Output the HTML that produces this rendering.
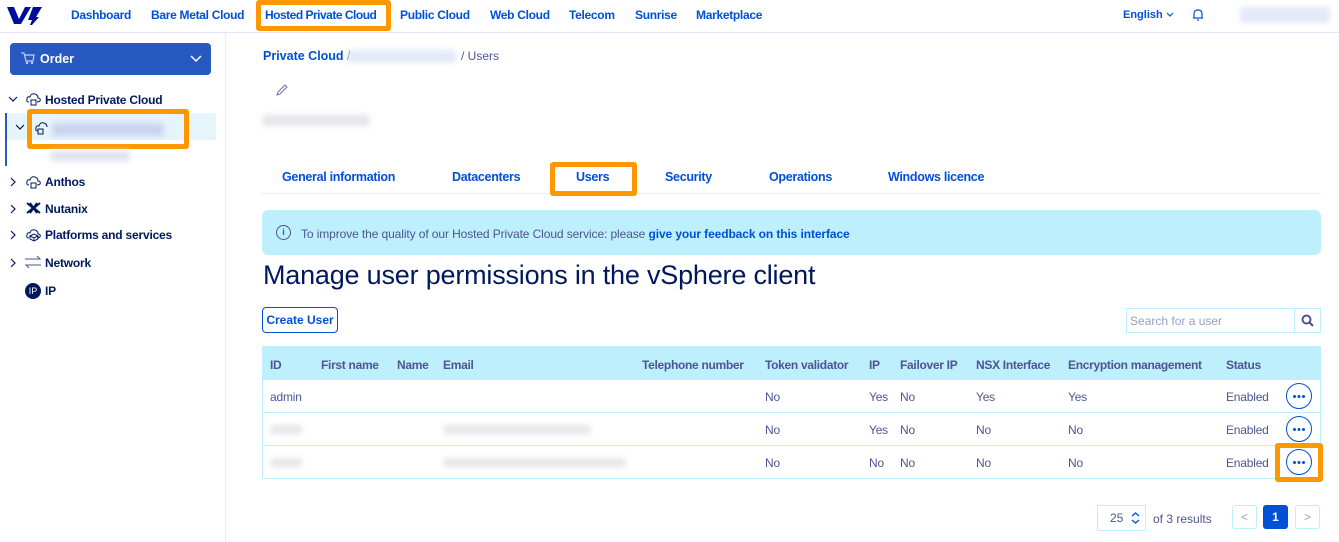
<!DOCTYPE html>
<html><head><meta charset="utf-8"><style>
*{margin:0;padding:0;box-sizing:border-box}
body{width:1339px;height:542px;overflow:hidden;background:#fff;font-family:"Liberation Sans",sans-serif;position:relative;color:#4d5592}
.a{position:absolute;white-space:nowrap}
.nav{font-size:12px;color:#0050d7;font-weight:bold;top:8px;letter-spacing:-0.3px}
.blur{filter:blur(3px);background:#dde3ee;border-radius:3px}
.side{font-size:12px;font-weight:bold;color:#00185e;letter-spacing:-0.2px}
.tab{font-size:12.5px;font-weight:bold;color:#0050d7;top:170px;letter-spacing:-0.3px}
.th{font-size:12px;font-weight:bold;color:#4d5592;top:358px;letter-spacing:-0.3px}
.td{font-size:12px;color:#4d5592;letter-spacing:-0.2px}
.dots{width:26px;height:26px;border:1.5px solid #0050d7;border-radius:50%;background:#fff}
.dots::after{content:"";position:absolute;left:6px;top:10.5px;width:3px;height:3px;border-radius:50%;background:#0050d7;box-shadow:4.5px 0 #0050d7,9px 0 #0050d7}
.orange{border:5px solid #ff9800;border-radius:3px}
</style></head><body>
<!-- header -->
<div class="a" style="left:0;top:0;width:1339px;height:33px;border-bottom:1px solid #e4e4f4"></div>
<svg class="a" style="left:6px;top:4px" width="36" height="22" viewBox="0 0 36 22"><path d="M1 3 L8 3 L13 15 L19 3 L25 3 L15 20 L8 20 Z" fill="#000e9c"/><path d="M27 3 L36 3 L30 13 L33 13 L26 21 L24 21 L26 16 L22 16 Z" fill="#000e9c"/></svg>
<div class="a nav" style="left:71px">Dashboard</div>
<div class="a nav" style="left:151px">Bare Metal Cloud</div>
<div class="a orange" style="left:256px;top:0;width:135px;height:31px;background:#fff"></div>
<div class="a nav" style="left:265px;letter-spacing:-0.5px">Hosted Private Cloud</div>
<div class="a nav" style="left:400px">Public Cloud</div>
<div class="a nav" style="left:490px">Web Cloud</div>
<div class="a nav" style="left:569px">Telecom</div>
<div class="a nav" style="left:635px">Sunrise</div>
<div class="a nav" style="left:696px">Marketplace</div>
<div class="a" style="left:1123px;top:9px;font-size:11px;font-weight:bold;color:#0050d7">English</div>
<svg class="a" style="left:1166px;top:12px" width="8" height="6" viewBox="0 0 8 6"><path d="M1 1 L4 4 L7 1" fill="none" stroke="#0050d7" stroke-width="1.2"/></svg>
<svg class="a" style="left:1192px;top:8px" width="12" height="13" viewBox="0 0 12 13"><path d="M2 10 L2 6 Q2 2 6 2 Q10 2 10 6 L10 10 Z M1 10 H11 M5 12 H7" fill="none" stroke="#0050d7" stroke-width="1.2"/></svg>
<div class="a blur" style="left:1240px;top:7px;width:90px;height:16px;background:#e3e9f7"></div>
<!-- sidebar -->
<div class="a" style="left:225px;top:33px;width:1px;height:509px;background:#eceef5"></div>
<div class="a" style="left:10px;top:43px;width:201px;height:32px;background:#2859c0;border-radius:4px"></div>
<svg class="a" style="left:21px;top:52px" width="14" height="13" viewBox="0 0 14 13"><path d="M0 1 H3 L5 9 H12 L13 3 H4" fill="none" stroke="#bfd0f5" stroke-width="1.2"/><circle cx="6" cy="11" r="1.2" fill="#bfd0f5"/><circle cx="11" cy="11" r="1.2" fill="#bfd0f5"/></svg>
<div class="a" style="left:40px;top:52px;font-size:12.5px;font-weight:bold;color:#fff">Order</div>
<svg class="a" style="left:190px;top:55px" width="12" height="8" viewBox="0 0 12 8"><path d="M1 1 L6 6 L11 1" fill="none" stroke="#fff" stroke-width="1.5"/></svg>
<svg class="a" style="left:8px;top:96px" width="10" height="6" viewBox="0 0 10 6"><path d="M1 1 L5 5 L9 1" fill="none" stroke="#00185e" stroke-width="1.2"/></svg>
<svg class="a" style="left:26px;top:92px" width="15" height="14" viewBox="0 0 15 14"><path d="M3 10 Q0 10 1 7 Q1 4 4 5 Q5 1 9 2 Q12 3 12 6 Q15 6 14 9 Q13 10 11 10" fill="none" stroke="#00185e" stroke-width="1"/><rect x="5" y="8" width="5" height="5" fill="none" stroke="#00185e"/></svg>
<div class="a side" style="left:45px;top:93px">Hosted Private Cloud</div>
<div class="a" style="left:5px;top:113px;width:211px;height:27px;background:#e6f4fc"></div>
<div class="a" style="left:5px;top:113px;width:2px;height:53px;background:#2859c0"></div>
<div class="a orange" style="left:27px;top:109px;width:162px;height:40px"></div>
<svg class="a" style="left:15px;top:124px" width="10" height="6" viewBox="0 0 10 6"><path d="M1 1 L5 5 L9 1" fill="none" stroke="#00185e" stroke-width="1.2"/></svg>
<svg class="a" style="left:35px;top:121px" width="14" height="14" viewBox="0 0 14 14"><path d="M3 10 Q0 10 1 7 Q1 4 4 5 Q5 1 9 2 Q12 3 12 6" fill="none" stroke="#00185e" stroke-width="1"/><rect x="3" y="8" width="5" height="5" fill="none" stroke="#00185e"/></svg>
<div class="a blur" style="left:52px;top:123px;width:112px;height:13px;background:#c9d3f0"></div>
<div class="a blur" style="left:50px;top:151px;width:80px;height:10px"></div>
<svg class="a" style="left:10px;top:177px" width="6" height="10" viewBox="0 0 6 10"><path d="M1 1 L5 5 L1 9" fill="none" stroke="#00185e" stroke-width="1.2"/></svg>
<svg class="a" style="left:26px;top:175px" width="15" height="14" viewBox="0 0 15 14"><path d="M3 10 Q0 10 1 7 Q1 4 4 5 Q5 1 9 2 Q12 3 12 6 Q15 6 14 9 Q13 10 11 10" fill="none" stroke="#00185e" stroke-width="1"/><rect x="5" y="8" width="5" height="5" fill="none" stroke="#00185e"/></svg>
<div class="a side" style="left:45px;top:175px">Anthos</div>
<svg class="a" style="left:10px;top:204px" width="6" height="10" viewBox="0 0 6 10"><path d="M1 1 L5 5 L1 9" fill="none" stroke="#00185e" stroke-width="1.2"/></svg>
<svg class="a" style="left:26px;top:202px" width="15" height="12" viewBox="0 0 15 12"><path d="M1 1 L7 6 L1 11 M14 1 L8 6 L14 11 M4 1 L11 11 M11 1 L4 11" stroke="#00185e" stroke-width="2" fill="none"/></svg>
<div class="a side" style="left:45px;top:202px">Nutanix</div>
<svg class="a" style="left:10px;top:230px" width="6" height="10" viewBox="0 0 6 10"><path d="M1 1 L5 5 L1 9" fill="none" stroke="#00185e" stroke-width="1.2"/></svg>
<svg class="a" style="left:26px;top:228px" width="15" height="14" viewBox="0 0 15 14"><path d="M3 10 Q0 10 1 7 Q1 4 4 5 Q5 1 9 2 Q12 3 12 6 Q15 6 14 9 Q13 10 11 10 M4 8 L8 6 L12 8 L8 10 Z M4 8 V11 L8 13 L12 11 V8 M8 10 V13" fill="none" stroke="#00185e" stroke-width="1"/></svg>
<div class="a side" style="left:45px;top:228px">Platforms and services</div>
<svg class="a" style="left:10px;top:258px" width="6" height="10" viewBox="0 0 6 10"><path d="M1 1 L5 5 L1 9" fill="none" stroke="#00185e" stroke-width="1.2"/></svg>
<svg class="a" style="left:25px;top:256px" width="16" height="12" viewBox="0 0 16 12"><path d="M0 3 H15 L12 0 M16 9 H1 L4 12" stroke="#4d5592" stroke-width="1" fill="none"/></svg>
<div class="a side" style="left:45px;top:256px">Network</div>
<div class="a" style="left:25px;top:283px;width:16px;height:16px;border-radius:50%;background:#00185e;color:#fff;font-size:9px;text-align:center;line-height:16px">IP</div>
<div class="a side" style="left:45px;top:284px">IP</div>
<!-- main -->
<div class="a" style="left:263px;top:49px;font-size:12.5px;font-weight:bold;color:#0050d7">Private Cloud <span style="color:#4d5592;font-weight:normal">/</span></div>
<div class="a blur" style="left:348px;top:50px;width:108px;height:13px;background:#e3e9f7"></div>
<div class="a" style="left:461px;top:49px;font-size:12px;color:#4d5592">/ Users</div>
<svg class="a" style="left:275px;top:84px" width="13" height="13" viewBox="0 0 13 13"><path d="M2 11 L3 8 L10 1 L12 3 L5 10 Z" fill="none" stroke="#6a6fa6" stroke-width="1"/></svg>
<div class="a blur" style="left:262px;top:115px;width:108px;height:11px;background:#e6e6ea"></div>
<div class="a" style="left:262px;top:193px;width:1059px;height:1px;background:#e6eef6"></div>
<div class="a orange" style="left:550px;top:162px;width:87px;height:34px"></div>
<div class="a tab" style="left:282px">General information</div>
<div class="a tab" style="left:452px">Datacenters</div>
<div class="a tab" style="left:576px">Users</div>
<div class="a tab" style="left:665px">Security</div>
<div class="a tab" style="left:769px">Operations</div>
<div class="a tab" style="left:888px">Windows licence</div>
<div class="a" style="left:262px;top:210px;width:1059px;height:45px;background:#bdeffc;border-radius:6px"></div>
<div class="a" style="left:276px;top:225px;width:15px;height:15px;border:1.3px solid #4d5592;border-radius:50%;font-size:9px;text-align:center;line-height:13px;font-weight:bold">i</div>
<div class="a" style="left:301px;top:227px;font-size:12px;color:#4d5592;letter-spacing:-0.1px">To improve the quality of our Hosted Private Cloud service: please <b style="color:#0050d7">give your feedback on this interface</b></div>
<div class="a" style="left:263px;top:260px;font-size:27px;color:#00185e;letter-spacing:-0.2px">Manage user permissions in the vSphere client</div>
<div class="a" style="left:262px;top:307px;width:76px;height:26px;border:1px solid #0050d7;border-radius:4px;font-size:12px;font-weight:bold;color:#0050d7;text-align:center;line-height:24px">Create User</div>
<div class="a" style="left:1126px;top:308px;width:195px;height:25px;border:1px solid #bdeffc"></div>
<div class="a" style="left:1294px;top:308px;width:1px;height:25px;background:#bdeffc"></div>
<div class="a" style="left:1130px;top:314px;font-size:12px;color:#9a9dbf">Search for a user</div>
<svg class="a" style="left:1301px;top:314px" width="13" height="13" viewBox="0 0 13 13"><circle cx="5.5" cy="5.5" r="4" fill="none" stroke="#4d5592" stroke-width="2"/><path d="M8.5 8.5 L12 12" stroke="#4d5592" stroke-width="2.2"/></svg>
<!-- table -->
<div class="a" style="left:262px;top:346px;width:1059px;height:133px;border:1px solid #bdeffc"></div>
<div class="a" style="left:262px;top:346px;width:1059px;height:34px;background:#bdeffc"></div>
<div class="a" style="left:262px;top:412px;width:1059px;height:1px;background:#bdeffc"></div>
<div class="a" style="left:262px;top:445px;width:1059px;height:1px;background:#bdeffc"></div>
<div class="a th" style="left:270px">ID</div>
<div class="a th" style="left:321px">First name</div>
<div class="a th" style="left:397px">Name</div>
<div class="a th" style="left:443px">Email</div>
<div class="a th" style="left:642px">Telephone number</div>
<div class="a th" style="left:765px">Token validator</div>
<div class="a th" style="left:869px">IP</div>
<div class="a th" style="left:900px">Failover IP</div>
<div class="a th" style="left:976px">NSX Interface</div>
<div class="a th" style="left:1068px">Encryption management</div>
<div class="a th" style="left:1226px">Status</div>

<div class="a td" style="left:270px;top:390px">admin</div>
<div class="a td" style="left:765px;top:390px">No</div><div class="a td" style="left:869px;top:390px">Yes</div><div class="a td" style="left:900px;top:390px">No</div><div class="a td" style="left:976px;top:390px">Yes</div><div class="a td" style="left:1068px;top:390px">Yes</div><div class="a td" style="left:1226px;top:390px">Enabled</div>
<div class="a dots" style="left:1286px;top:383px"></div>

<div class="a blur" style="left:270px;top:425px;width:32px;height:9px;background:#e6e6ea"></div>
<div class="a blur" style="left:443px;top:425px;width:148px;height:9px;background:#e6e6ea"></div>
<div class="a td" style="left:765px;top:423px">No</div><div class="a td" style="left:869px;top:423px">Yes</div><div class="a td" style="left:900px;top:423px">No</div><div class="a td" style="left:976px;top:423px">No</div><div class="a td" style="left:1068px;top:423px">No</div><div class="a td" style="left:1226px;top:423px">Enabled</div>
<div class="a dots" style="left:1286px;top:416px"></div>

<div class="a blur" style="left:270px;top:458px;width:32px;height:9px;background:#e6e6ea"></div>
<div class="a blur" style="left:443px;top:458px;width:183px;height:9px;background:#e6e6ea"></div>
<div class="a td" style="left:765px;top:456px">No</div><div class="a td" style="left:869px;top:456px">No</div><div class="a td" style="left:900px;top:456px">No</div><div class="a td" style="left:976px;top:456px">No</div><div class="a td" style="left:1068px;top:456px">No</div><div class="a td" style="left:1226px;top:456px">Enabled</div>
<div class="a orange" style="left:1275px;top:443px;width:48px;height:39px;background:#fff"></div>
<div class="a dots" style="left:1286px;top:449px"></div>
<!-- pagination -->
<div class="a" style="left:1097px;top:505px;width:49px;height:26px;border:1px solid #bdeffc"></div>
<div class="a" style="left:1110px;top:511px;font-size:12px;color:#4d5592">25</div>
<svg class="a" style="left:1131px;top:512px" width="9" height="12" viewBox="0 0 9 12"><path d="M1 4 L4.5 1 L8 4 M1 8 L4.5 11 L8 8" fill="none" stroke="#0050d7" stroke-width="1.3"/></svg>
<div class="a" style="left:1153px;top:512px;font-size:12px;color:#4d5592">of 3 results</div>
<div class="a" style="left:1232px;top:505px;width:25px;height:24px;border:1px solid #bdeffc;border-radius:3px;color:#9ab;text-align:center;font-size:12px;line-height:22px">&lt;</div>
<div class="a" style="left:1263px;top:505px;width:25px;height:24px;background:#0050d7;border-radius:3px;color:#fff;text-align:center;font-size:12px;font-weight:bold;line-height:24px">1</div>
<div class="a" style="left:1295px;top:505px;width:25px;height:24px;border:1px solid #bdeffc;border-radius:3px;color:#9ab;text-align:center;font-size:12px;line-height:22px">&gt;</div>
</body></html>
